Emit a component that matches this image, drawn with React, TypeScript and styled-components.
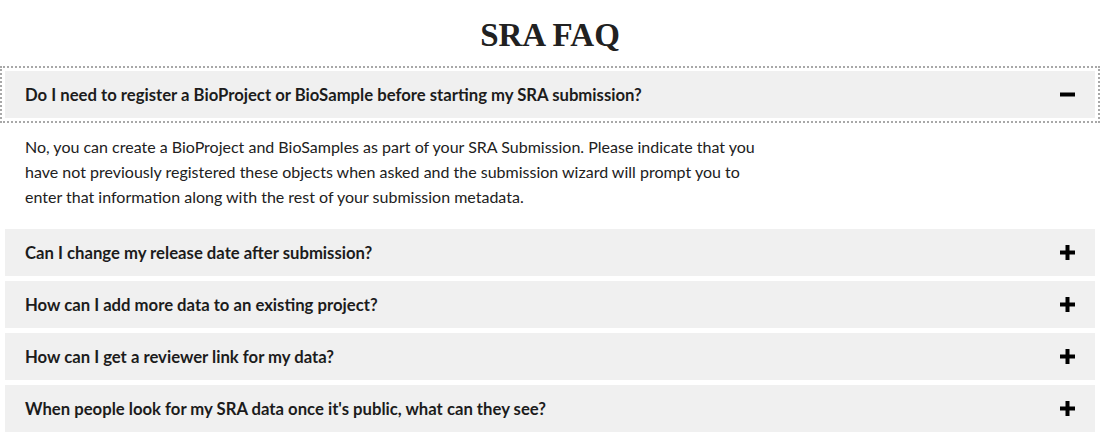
import styled, { createGlobalStyle } from 'styled-components';

const GlobalStyle = createGlobalStyle`
  body {
    margin: 0;
    background: #fff;
    font-family: Lato, 'Liberation Sans', sans-serif;
    color: #212121;
  }
`;

const Page = styled.div`
  width: 1100px;
  padding: 0 5px;
  box-sizing: border-box;
`;

const Title = styled.h1`
  margin: 0;
  padding-top: 15px;
  height: 66px;
  box-sizing: border-box;
  text-align: center;
  font-family: 'Liberation Serif', serif;
  font-weight: 700;
  font-size: 33px;
  line-height: 40px;
  color: #212121;
`;

const List = styled.div`
  display: flex;
  flex-direction: column;
  gap: 5px;
  padding-top: 5px;
`;

const Item = styled.div``;

const Question = styled.button<{ $focused?: boolean }>`
  display: flex;
  align-items: center;
  justify-content: space-between;
  width: 100%;
  height: 47px;
  padding: 0 20px;
  border: 0;
  background: #f0f0f0;
  font-family: inherit;
  font-weight: 700;
  font-size: 16.7px;
  color: #1c1c1c;
  text-align: left;
  cursor: pointer;
  outline: ${(p) => (p.$focused ? '2px dotted #a8a8a8' : 'none')};
  outline-offset: 3px;
`;

const Answer = styled.div`
  padding: 16px 20px 15px;
  max-width: 750px;
  font-size: 16px;
  line-height: 25px;
  color: #212121;
`;

const Toggle = ({ open }: { open: boolean }) => (
  <svg width='15' height='15' viewBox='0 0 15 15'>
    <rect x='0' y='5.5' width='15' height='4' fill='#000' />
    {!open && <rect x='5.5' y='0' width='4' height='15' fill='#000' />}
  </svg>
);

const faqs = [
  {
    q: 'Do I need to register a BioProject or BioSample before starting my SRA submission?',
    a: 'No, you can create a BioProject and BioSamples as part of your SRA Submission. Please indicate that you have not previously registered these objects when asked and the submission wizard will prompt you to enter that information along with the rest of your submission metadata.',
    open: true
  },
  { q: 'Can I change my release date after submission?' },
  { q: 'How can I add more data to an existing project?' },
  { q: 'How can I get a reviewer link for my data?' },
  { q: "When people look for my SRA data once it's public, what can they see?" }
];

const App = () => {
  return (
    <>
      <GlobalStyle />
      <Page>
        <Title>SRA FAQ</Title>
        <List>
          {faqs.map((f) => (
            <Item key={f.q}>
              <Question $focused={f.open}>
                <span>{f.q}</span>
                <Toggle open={!!f.open} />
              </Question>
              {f.open && <Answer>{f.a}</Answer>}
            </Item>
          ))}
        </List>
      </Page>
    </>
  );
};

export default App;
